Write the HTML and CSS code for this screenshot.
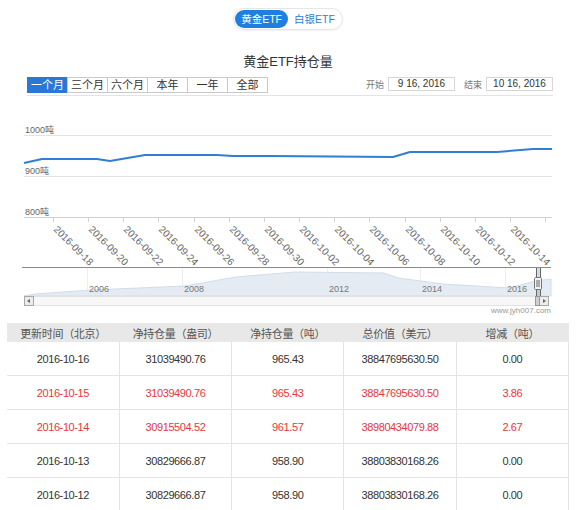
FILE: index.html
```html
<!DOCTYPE html>
<html lang="zh-CN">

<head>
  <meta charset="UTF-8" />
  <title>黄金ETF持仓量</title>
  <link rel="stylesheet" href="styles.css">
</head>

<body>

  <div class="etf-switch">
    <div class="switch-box">
      <span class="switch-item active">黄金ETF</span>
      <span class="switch-item">白银ETF</span>
    </div>
  </div>

  <h2 class="chart-title">黄金ETF持仓量</h2>

  <div class="toolbar">
    <div class="range-btns">
      <span class="range-btn active">一个月</span>
      <span class="range-btn">三个月</span>
      <span class="range-btn">六个月</span>
      <span class="range-btn">本年</span>
      <span class="range-btn">一年</span>
      <span class="range-btn">全部</span>
    </div>
    <div class="date-range">
      <span class="date-label">开始</span>
      <span class="date-box">9 16, 2016</span>
      <span class="date-label">结束</span>
      <span class="date-box">10 16, 2016</span>
    </div>
  </div>

  <!-- chart: viewBox uses page y so the numbers read like the screenshot -->
  <svg class="chart" width="576" height="222" viewBox="0 96 576 222">
    <g class="grid">
      <line x1="24" y1="135.5" x2="552" y2="135.5" />
      <line x1="24" y1="176.5" x2="552" y2="176.5" />
    </g>
    <line class="x-axis" x1="24" y1="217.5" x2="552" y2="217.5" />
    <g class="y-labels">
      <text x="25" y="133">1000吨</text>
      <text x="25" y="174">900吨</text>
      <text x="25" y="215">800吨</text>
    </g>
    <g id="ticks" class="ticks"></g>
    <g id="xLabels" class="x-labels"></g>
    <polyline class="series" points="24,163 42,159 97,159 110,161 145,155 217,155 233,156 270,156 393,157 410,152 497,152 533,149 552,149" />

    <!-- navigator -->
    <g class="nav-grid">
      <line x1="87.5" y1="268" x2="87.5" y2="296" />
      <line x1="182.5" y1="268" x2="182.5" y2="296" />
      <line x1="327.5" y1="268" x2="327.5" y2="296" />
      <line x1="420.5" y1="268" x2="420.5" y2="296" />
      <line x1="505.5" y1="268" x2="505.5" y2="296" />
    </g>
    <path class="nav-area" d="M24,296 L35,294 L92,290 L185,286 L236,277 L295,272 L384,273 L398,278 L443,284 L509,288 L535,281 L551,279 L551,296 Z" />
    <g class="nav-labels">
      <text x="89" y="292">2006</text>
      <text x="184" y="292">2008</text>
      <text x="329" y="292">2012</text>
      <text x="422" y="292">2014</text>
      <text x="507" y="292">2016</text>
    </g>
    <line class="nav-top" x1="22" y1="267.5" x2="551" y2="267.5" />

    <rect class="track" x="33.5" y="296.5" width="505" height="9" />
    <rect class="sb-btn" x="24.5" y="296.5" width="9" height="9" />
    <path class="sb-arrow" d="M30,299 L27,301 L30,303 Z" />
    <rect class="sb-btn" x="539.5" y="296.5" width="9" height="9" />
    <path class="sb-arrow" d="M543,299 L546,301 L543,303 Z" />
    <rect class="sb-thumb" x="535.5" y="296.5" width="4" height="9" />

    <rect class="nav-sel" x="536" y="268" width="4" height="28" />
    <line class="nav-edge" x1="536.5" y1="268" x2="536.5" y2="296" />
    <line class="nav-edge" x1="540.5" y1="268" x2="540.5" y2="296" />
    <rect class="handle" x="534.5" y="277.5" width="7" height="12" rx="1" />
    <line class="handle-grip" x1="537" y1="280" x2="537" y2="287" />
    <line class="handle-grip" x1="539" y1="280" x2="539" y2="287" />

    <text class="credit" x="551" y="313">www.jyh007.com</text>
  </svg>

  <table class="etf-table">
    <thead>
      <tr>
        <th>更新时间（北京）</th>
        <th>净持仓量（盎司）</th>
        <th>净持仓量（吨）</th>
        <th>总价值（美元）</th>
        <th>增减（吨）</th>
      </tr>
    </thead>
    <tbody>
      <tr>
        <td>2016-10-16</td>
        <td>31039490.76</td>
        <td>965.43</td>
        <td>38847695630.50</td>
        <td>0.00</td>
      </tr>
      <tr class="up">
        <td>2016-10-15</td>
        <td>31039490.76</td>
        <td>965.43</td>
        <td>38847695630.50</td>
        <td>3.86</td>
      </tr>
      <tr class="up">
        <td>2016-10-14</td>
        <td>30915504.52</td>
        <td>961.57</td>
        <td>38980434079.88</td>
        <td>2.67</td>
      </tr>
      <tr>
        <td>2016-10-13</td>
        <td>30829666.87</td>
        <td>958.90</td>
        <td>38803830168.26</td>
        <td>0.00</td>
      </tr>
      <tr>
        <td>2016-10-12</td>
        <td>30829666.87</td>
        <td>958.90</td>
        <td>38803830168.26</td>
        <td>0.00</td>
      </tr>
    </tbody>
  </table>

  <script>
    const ns = "http://www.w3.org/2000/svg";
    const ticks = document.getElementById("ticks");
    const xLabels = document.getElementById("xLabels");
    const step = 35.15;

    for (let i = 0; i < 15; i++) {
      const x = Math.round(53 + i * step) + 0.5;
      const tick = document.createElementNS(ns, "line");
      tick.setAttribute("x1", x);
      tick.setAttribute("x2", x);
      tick.setAttribute("y1", 217);
      tick.setAttribute("y2", 222);
      ticks.appendChild(tick);

      if (i < 14) {
        const d = new Date(2016, 8, 18 + i * 2);
        const mm = String(d.getMonth() + 1).padStart(2, "0");
        const dd = String(d.getDate()).padStart(2, "0");
        const label = document.createElementNS(ns, "text");
        const lx = Math.round(53 + i * step);
        label.setAttribute("x", lx);
        label.setAttribute("y", 230);
        label.setAttribute("transform", `rotate(45 ${lx} 230)`);
        label.textContent = `2016-${mm}-${dd}`;
        xLabels.appendChild(label);
      }
    }
  </script>

</body>

</html>
```

FILE: styles.css
```css
body {
  margin: 0;
  width: 576px;
  background: #fff;
  font-family: "Liberation Sans", "Noto Sans CJK SC", sans-serif;
  color: #333;
}

.etf-switch {
  display: flex;
  justify-content: center;
  padding-top: 8px;
}

.switch-box {
  display: flex;
  align-items: center;
  height: 18px;
  padding: 1px;
  border: 1px solid #e6e6e6;
  border-radius: 11px;
  box-shadow: 0 1px 2px rgba(0, 0, 0, 0.06);
}

.switch-item {
  height: 18px;
  line-height: 18px;
  padding: 0 6px;
  font-size: 10.5px;
  color: #2a80dc;
  border-radius: 9px;
}

.switch-item.active {
  background: #1e7fe0;
  color: #fff;
}

.chart-title {
  margin: 23px 0 0;
  height: 18px;
  line-height: 18px;
  font-size: 13px;
  font-weight: normal;
  text-align: center;
  color: #333;
}

.toolbar {
  display: flex;
  justify-content: space-between;
  align-items: flex-start;
  margin: 6px 23px 0 27px;
  height: 18px;
  border-bottom: 1px solid #e3e3e3;
}

.range-btns {
  display: flex;
}

.range-btn {
  width: 39px;
  height: 14px;
  line-height: 14px;
  border: 1px solid #c9c9c9;
  margin-left: -1px;
  font-size: 11px;
  text-align: center;
  color: #333;
  background: #fff;
}

.range-btn:first-child {
  margin-left: 0;
}

.range-btn.active {
  background: #2a78d6;
  border-color: #2a78d6;
  color: #fff;
}

.date-range {
  display: flex;
  align-items: center;
  gap: 4px;
}

.date-label {
  font-size: 9px;
  color: #777;
  margin-left: 5px;
}

.date-box {
  width: 65px;
  height: 12px;
  line-height: 12px;
  border: 1px solid #d6d6d6;
  font-size: 10px;
  text-align: center;
  color: #333;
}

.chart {
  display: block;
  font-family: "Liberation Sans", "Noto Sans CJK SC", sans-serif;
}

.grid line {
  stroke: #e2e2e2;
  stroke-width: 1;
}

.x-axis,
.ticks line {
  stroke: #d0d0d0;
  stroke-width: 1;
}

.y-labels text {
  font-size: 9px;
  fill: #666;
}

.x-labels text {
  font-size: 10px;
  fill: #666;
}

.series {
  fill: none;
  stroke: #2f7ed8;
  stroke-width: 2;
  stroke-linejoin: round;
}

.nav-grid line {
  stroke: #eeeeee;
}

.nav-area {
  fill: #e4ebf2;
  stroke: #d3dde8;
  stroke-width: 1;
}

.nav-labels text {
  font-size: 9px;
  fill: #777;
}

.nav-top {
  stroke: #8a8a8a;
  stroke-width: 1;
}

.track {
  fill: #f7f7f7;
  stroke: #e2e2e2;
}

.sb-btn {
  fill: #ececec;
  stroke: #a8a8a8;
}

.sb-arrow {
  fill: #666;
}

.sb-thumb {
  fill: #cfcfcf;
  stroke: #999;
}

.nav-sel {
  fill: rgba(69, 114, 167, 0.25);
}

.nav-edge {
  stroke: #666;
}

.handle {
  fill: #f2f2f2;
  stroke: #777;
}

.handle-grip {
  stroke: #666;
}

.credit {
  font-size: 8px;
  fill: #999;
  text-anchor: end;
}

.etf-table {
  margin: 5px 0 0 7px;
  width: 562px;
  border-collapse: collapse;
  table-layout: fixed;
  font-size: 11px;
}

.etf-table th {
  height: 19px;
  padding: 0;
  background: #e8e8e8;
  font-weight: normal;
  color: #555;
  letter-spacing: -0.3px;
}

.etf-table td {
  height: 33px;
  padding: 0;
  text-align: center;
  color: #333;
  border-bottom: 1px solid #e4e4e4;
  border-right: 1px solid #e4e4e4;
  letter-spacing: -0.4px;
}

.etf-table tr.up td {
  color: #e8363c;
}
```
